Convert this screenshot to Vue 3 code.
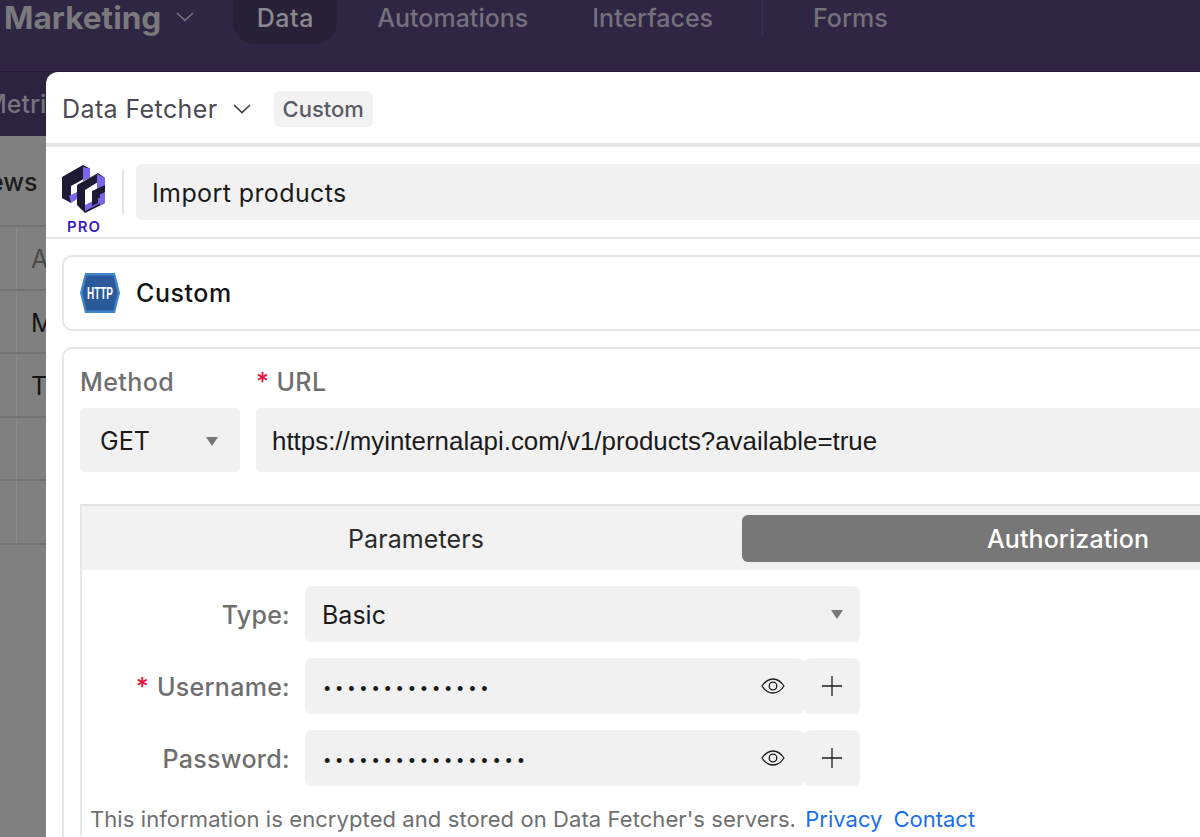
<template>
  <div class="page">
    <header class="topbar">
      <span class="base-name">Marketing</span>
      <svg class="base-chevron" width="18" height="10" viewBox="0 0 18 10"><path d="M1 1l8 7.5L17 1" fill="none" stroke="#77747f" stroke-width="1.6" /></svg>
      <nav class="nav">
        <span class="nav-item nav-active">Data</span>
        <span class="nav-item">Automations</span>
        <span class="nav-item">Interfaces</span>
        <span class="nav-sep"></span>
        <span class="nav-item nav-forms">Forms</span>
      </nav>
    </header>
    <div class="subbar"><span class="subbar-tab">Metrics</span></div>
    <div class="views-row"><span>Views</span></div>
    <div v-for="(row, i) in tableRows" :key="i" class="table-row" :class="{ 'table-head': i === 0 }">
      <span class="table-gutter"></span>
      <span class="table-cell">{{ row }}</span>
    </div>

    <section class="modal">
      <div class="modal-header">
        <span class="modal-title">Data Fetcher</span>
        <svg class="title-chevron" width="18" height="10" viewBox="0 0 18 10"><path d="M1 1l8 7.5L17 1" fill="none" stroke="#3f3f49" stroke-width="1.7" /></svg>
        <span class="chip">Custom</span>
      </div>

      <div class="name-row">
        <div class="logo">
          <svg width="44" height="48" viewBox="0 0 44 48">
            <path d="M0 12L21 0l7 3.500v7L9 21v17l-9-5z" fill="#1f1a33" />
            <path d="M21 2l7 1.500v9l-7 3.500z" fill="#7a66e8" />
            <path d="M7 31l8-4v7l-6 4z" fill="#7a66e8" />
            <path d="M15 20L36 8l7 5v25L23 48l-8-8z" fill="#1f1a33" />
            <path d="M23 25l13-8v21l-13 7z" fill="#fff" />
            <path d="M35 9l8 4v9l-8 4z" fill="#7a66e8" />
            <path d="M38 26l5-2.500V38l-5 2.500z" fill="#7a66e8" />
            <path d="M23 40l15-7.500v6L23 46z" fill="#7a66e8" />
            <path d="M30 26l13-6v7l-7 3.500V38l-6 3z" fill="#1f1a33" />
          </svg>
          <span class="logo-label">PRO</span>
        </div>
        <span class="name-sep"></span>
        <div class="name-input">Import products</div>
      </div>

      <div class="body">
        <div class="card source-card">
          <svg class="http-icon" width="40" height="40" viewBox="0 0 40 40">
            <path d="M5 0h30l5 20-5 20H5L0 20z" fill="#3f87c9" />
            <path d="M6.500 2.500h27l4 17.500-4 17.500h-27L2.500 20z" fill="#2a5a9a" />
            <text x="20" y="26" text-anchor="middle" textLength="26" lengthAdjust="spacingAndGlyphs" class="http-text">HTTP</text>
          </svg>
          <span class="source-name">Custom</span>
        </div>

        <div class="card request-card">
          <div class="request-row">
            <div class="method-col">
              <label class="field-label">Method</label>
              <div class="select method-select">
                <span>GET</span>
                <span class="caret"></span>
              </div>
            </div>
            <div class="url-col">
              <label class="field-label"><span class="required url-required">*</span>URL</label>
              <div class="url-input">https://myinternalapi.com/v1/products?available=true</div>
            </div>
          </div>

          <div class="tab-panel">
            <div class="tabs">
              <div class="tab">Parameters</div>
              <div class="tab tab-active">Authorization</div>
            </div>
            <div class="auth-form">
              <div class="form-row">
                <label class="form-label">Type:</label>
                <div class="select type-select">
                  <span>Basic</span>
                  <span class="caret"></span>
                </div>
              </div>
              <div v-for="field in secretFields" :key="field.label" class="form-row">
                <label class="form-label"><span v-if="field.required" class="required">*</span>{{ field.label }}:</label>
                <div class="secret-input">
                  <span class="dots">{{ field.value }}</span>
                  <svg width="24" height="16" viewBox="0 0 24 16"><path d="M1 8c3-4.500 6.500-7 11-7s8 2.500 11 7c-3 4.500-6.500 7-11 7S4 12.500 1 8z" fill="none" stroke="#1c1c1c" stroke-width="1.300" /><circle cx="12" cy="8" r="3.800" fill="none" stroke="#1c1c1c" stroke-width="1.300" /></svg>
                </div>
                <div class="add-button">
                  <svg width="20" height="20" viewBox="0 0 20 20"><path d="M10 0v20M0 10h20" stroke="#1c1c1c" stroke-width="1.300" /></svg>
                </div>
              </div>
            </div>
            <p class="notice">This information is encrypted and stored on Data Fetcher's servers. <a class="link first-link">Privacy</a><a class="link">Contact</a></p>
          </div>
        </div>
      </div>
    </section>
  </div>
</template>

<script setup>
const tableRows = ['A', 'M', 'T', '', '']

const secretFields = [
  { label: 'Username', required: true, value: '••••••••••••••' },
  { label: 'Password', required: false, value: '•••••••••••••••••' }
]
</script>

<style>
html, body {
  margin: 0;
  overflow: hidden;
}
</style>

<style scoped>
.page {
  position: relative;
  width: 1200px;
  height: 837px;
  overflow: hidden;
  background: #808080;
  font-family: Inter, "Liberation Sans", sans-serif;
  font-size: 25px;
}

.topbar {
  box-sizing: border-box;
  height: 72px;
  display: flex;
  align-items: flex-start;
  padding-left: 4px;
  background: #2f2644;
  border-bottom: 1px solid #22163a;
}

.base-name {
  font-size: 31.600px;
  line-height: 36px;
  font-weight: 700;
  color: #7a7a7c;
}

.base-chevron {
  margin: 12px 0 0 15px;
}

.nav {
  display: flex;
  align-items: flex-start;
  margin-left: 39px;
}

.nav-item {
  height: 44px;
  line-height: 36px;
  padding: 0 24px 0 40px;
  font-weight: 500;
  color: #74707c;
}

.nav-active {
  box-sizing: border-box;
  width: 104px;
  padding: 0;
  text-align: center;
  letter-spacing: 0.500px;
  color: #8b8990;
  background: #272036;
  border-radius: 0 0 22px 22px;
}

.nav-forms {
  padding-left: 50px;
}

.nav-sep {
  width: 1px;
  height: 36px;
  margin: 0 0 0 25px;
  background: #3a3150;
}

.subbar {
  height: 64px;
  overflow: hidden;
  background: #2b2340;
  color: #77747f;
  font-weight: 500;
}

.subbar-tab {
  display: block;
  margin-left: -16px;
  line-height: 64px;
}

.views-row {
  box-sizing: border-box;
  height: 91px;
  margin-left: -35px;
  line-height: 92px;
  font-weight: 500;
  color: #1c1c1c;
  border-bottom: 2px solid #727272;
}

.table-row {
  box-sizing: border-box;
  height: 63.600px;
  display: flex;
  line-height: 64px;
  color: #141414;
  border-bottom: 2px solid #727272;
}

.table-head {
  color: #4a4a4a;
}

.table-gutter {
  width: 16px;
  border-right: 1px solid #8a8a8a;
}

.table-cell {
  padding-left: 14px;
}

.modal {
  position: absolute;
  top: 72px;
  left: 46px;
  width: 1412px;
  height: 780px;
  background: #fff;
  border-radius: 12px 0 0 0;
}

.modal-header {
  box-sizing: border-box;
  height: 75px;
  display: flex;
  align-items: center;
  padding: 2px 16px 0 16px;
  border-bottom: 4px solid #e6e6e6;
}

.modal-title {
  letter-spacing: 0.400px;
  color: #4a4a55;
}

.title-chevron {
  margin-left: 15px;
}

.chip {
  margin-left: 23px;
  padding: 0 9px;
  height: 36px;
  line-height: 37px;
  font-size: 22px;
  font-weight: 500;
  color: #5b5b66;
  background: #f2f2f2;
  border-radius: 6px;
}

.name-row {
  box-sizing: border-box;
  height: 92px;
  display: flex;
  align-items: flex-start;
  padding: 17px 16px 0;
  border-bottom: 2px solid #e6e6e6;
}

.logo {
  width: 44px;
  margin-top: 1px;
  display: flex;
  flex-direction: column;
  align-items: center;
}

.logo-label {
  margin-top: 5px;
  font-size: 15px;
  line-height: 18px;
  font-weight: 600;
  letter-spacing: 1px;
  color: #3d1fc0;
}

.name-sep {
  width: 2px;
  height: 46px;
  margin: 5px 12px 0 16px;
  background: #e6e6e6;
}

.name-input {
  flex: 1;
  height: 56px;
  line-height: 58px;
  padding-left: 16px;
  letter-spacing: 0.400px;
  color: #1a1a1a;
  background: #f1f1f1;
  border-radius: 6px;
}

.body {
  padding: 16px 16px 0;
}

.card {
  border: 2px solid #e6e6e6;
  border-radius: 10px;
}

.source-card {
  height: 72px;
  display: flex;
  align-items: center;
  padding-left: 16px;
  margin-bottom: 16px;
}

.http-text {
  font-family: "Liberation Sans", sans-serif;
  font-size: 16px;
  font-weight: 700;
  fill: #fff;
}

.source-name {
  margin-left: 16px;
  font-weight: 500;
  letter-spacing: 0.550px;
  color: #141414;
}

.request-card {
  padding: 16px 16px 40px;
}

.request-row {
  display: flex;
  gap: 16px;
}

.method-col {
  width: 160px;
}

.url-col {
  flex: 1;
}

.field-label {
  display: block;
  height: 43px;
  line-height: 35px;
  font-weight: 500;
  letter-spacing: 0.400px;
  color: #6f6f6f;
}

.required {
  margin-right: 8px;
  color: #e8103c;
}

.url-required {
  margin-right: 7px;
}

.select {
  box-sizing: border-box;
  display: flex;
  align-items: center;
  justify-content: space-between;
  background: #f1f1f1;
  border-radius: 6px;
  color: #1a1a1a;
}

.method-select {
  height: 64px;
  padding: 2px 22px 0 20px;
}

.caret {
  width: 0;
  height: 0;
  border-left: 6.500px solid transparent;
  border-right: 6.500px solid transparent;
  border-top: 9px solid #777;
}

.url-input {
  height: 64px;
  line-height: 66px;
  padding-left: 16px;
  font-family: "Liberation Sans", sans-serif;
  font-size: 25.900px;
  color: #1a1a1a;
  background: #f1f1f1;
  border-radius: 6px;
}

.tab-panel {
  margin-top: 32px;
  border-top: 2px solid #e2e2e2;
  border-left: 2px solid #e8e8e8;
}

.tabs {
  box-sizing: border-box;
  height: 64px;
  display: flex;
  padding: 9px 8px 8px 8px;
  background: #f2f2f2;
}

.tab {
  width: 652px;
  height: 47px;
  line-height: 49px;
  text-align: center;
  letter-spacing: 0.100px;
  color: #2a2a2a;
  border-radius: 6px;
}

.tab-active {
  color: #fff;
  background: #777;
  font-weight: 500;
}

.auth-form {
  display: flex;
  flex-direction: column;
  gap: 16px;
  padding-top: 16px;
}

.form-row {
  display: flex;
  height: 56px;
  align-items: stretch;
}

.form-label {
  width: 208px;
  margin-right: 15px;
  text-align: right;
  line-height: 59px;
  font-weight: 500;
  letter-spacing: 0.300px;
  color: #6f6f6f;
}

.type-select {
  width: 555px;
  padding: 1px 17px 0;
}

.secret-input {
  box-sizing: border-box;
  width: 499px;
  display: flex;
  align-items: center;
  justify-content: space-between;
  padding: 0 19px 0 19px;
  background: #f1f1f1;
  border-radius: 6px;
}

.dots {
  margin-top: 7px;
  font-family: "Liberation Sans", sans-serif;
  font-size: 18px;
  letter-spacing: 5.800px;
  color: #1a1a1a;
}

.add-button {
  width: 56px;
  display: flex;
  align-items: center;
  justify-content: center;
  background: #f1f1f1;
  border-radius: 6px;
}

.notice {
  margin: 16px 0 0 8px;
  line-height: 34px;
  font-size: 22px;
  letter-spacing: 0.080px;
  color: #6f6f6f;
}

.link {
  letter-spacing: 0;
  color: #1a6fe8;
  margin-left: 11px;
}

.first-link {
  margin-left: 3px;
}
</style>
